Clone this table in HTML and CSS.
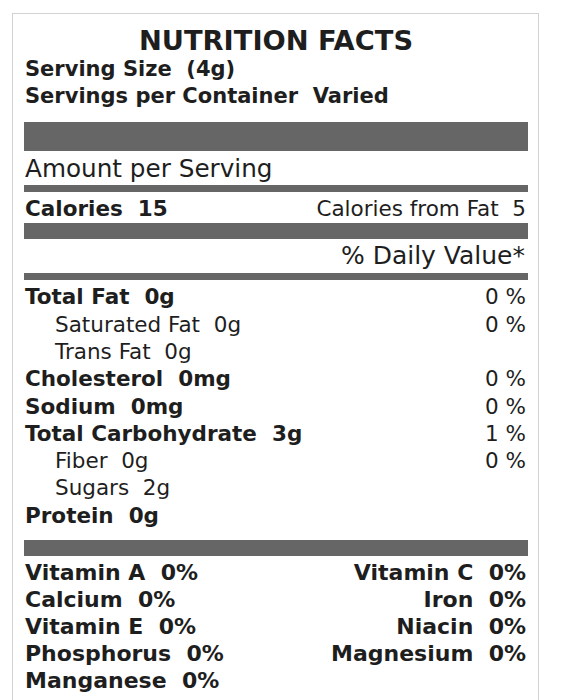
FILE: index.html
```html
<!DOCTYPE html>
<html lang="en">
<head>
<meta charset="utf-8">
<title>Nutrition Facts</title>
<link rel="stylesheet" href="styles.css">
</head>
<body>
<div class="label">
  <h1 class="title">NUTRITION FACTS</h1>
  <div class="serving">Serving Size&nbsp; (4g)</div>
  <div class="serving">Servings per Container&nbsp; Varied</div>
  <div class="bar bar-thick"></div>
  <div class="amount">Amount per Serving</div>
  <div class="bar bar-thin"></div>
  <div class="calories">
    <span class="cal-main">Calories&nbsp; 15</span>
    <span class="cal-fat">Calories from Fat&nbsp; 5</span>
  </div>
  <div class="bar bar-mid"></div>
  <div class="dv">% Daily Value*</div>
  <div class="bar bar-thin"></div>
  <ul class="nutrients">
    <li class="row main"><span>Total Fat&nbsp; 0g</span><span class="pct">0 %</span></li>
    <li class="row sub"><span>Saturated Fat&nbsp; 0g</span><span class="pct">0 %</span></li>
    <li class="row sub"><span>Trans Fat&nbsp; 0g</span></li>
    <li class="row main"><span>Cholesterol&nbsp; 0mg</span><span class="pct">0 %</span></li>
    <li class="row main"><span>Sodium&nbsp; 0mg</span><span class="pct">0 %</span></li>
    <li class="row main"><span>Total Carbohydrate&nbsp; 3g</span><span class="pct">1 %</span></li>
    <li class="row sub"><span>Fiber&nbsp; 0g</span><span class="pct">0 %</span></li>
    <li class="row sub"><span>Sugars&nbsp; 2g</span></li>
    <li class="row main"><span>Protein&nbsp; 0g</span></li>
  </ul>
  <div class="bar bar-mid"></div>
  <div class="vitamins">
    <span class="vit">Vitamin A&nbsp; 0%</span>
    <span class="vit right">Vitamin C&nbsp; 0%</span>
    <span class="vit">Calcium&nbsp; 0%</span>
    <span class="vit right">Iron&nbsp; 0%</span>
    <span class="vit">Vitamin E&nbsp; 0%</span>
    <span class="vit right">Niacin&nbsp; 0%</span>
    <span class="vit">Phosphorus&nbsp; 0%</span>
    <span class="vit right">Magnesium&nbsp; 0%</span>
    <span class="vit">Manganese&nbsp; 0%</span>
  </div>
</div>
</body>
</html>
```
FILE: styles.css
```css
html, body {
  margin: 0;
  padding: 0;
  background: #ffffff;
}

body {
  font-family: "DejaVu Sans", Verdana, sans-serif;
  color: #1e1e1e;
}

.label {
  margin: 13px 0 0 12px;
  width: 504px;
  padding: 12px 10px 20px 11px;
  border: 1px solid #d2d2d2;
}

.title {
  margin: 0;
  font-size: 27.3px;
  font-weight: bold;
  line-height: 30px;
  text-align: center;
}

.serving {
  font-size: 21px;
  font-weight: bold;
  line-height: 27px;
  padding-left: 1px;
}

.bar {
  background: #666666;
}

.bar-thick {
  height: 29px;
  margin-top: 12px;
}

.bar-mid {
  height: 16px;
}

.bar-thin {
  height: 7px;
}

.amount {
  font-size: 24.7px;
  line-height: 32px;
  padding: 2px 0 0 1px;
}

.calories {
  display: flex;
  justify-content: space-between;
  font-size: 21.5px;
  line-height: 29px;
  padding: 2px 2px 0 1px;
}

.cal-main {
  font-weight: bold;
}

.dv {
  font-size: 25px;
  line-height: 26px;
  padding: 4.3px 3px 3.7px 0;
  text-align: right;
}

.nutrients {
  list-style: none;
  margin: 0;
  padding: 3.4px 0 10.9px 0;
}

.row {
  display: flex;
  justify-content: space-between;
  font-size: 21.5px;
  line-height: 27.3px;
  padding: 0 2px 0 1px;
}

.row.main {
  font-weight: bold;
}

.row.sub {
  padding-left: 31px;
}

.pct {
  font-weight: normal;
}

.vitamins {
  display: grid;
  grid-template-columns: 1fr 1fr;
  padding: 3px 2px 0 1px;
  font-size: 22px;
  font-weight: bold;
  line-height: 27.1px;
}

.vit.right {
  text-align: right;
}
```
